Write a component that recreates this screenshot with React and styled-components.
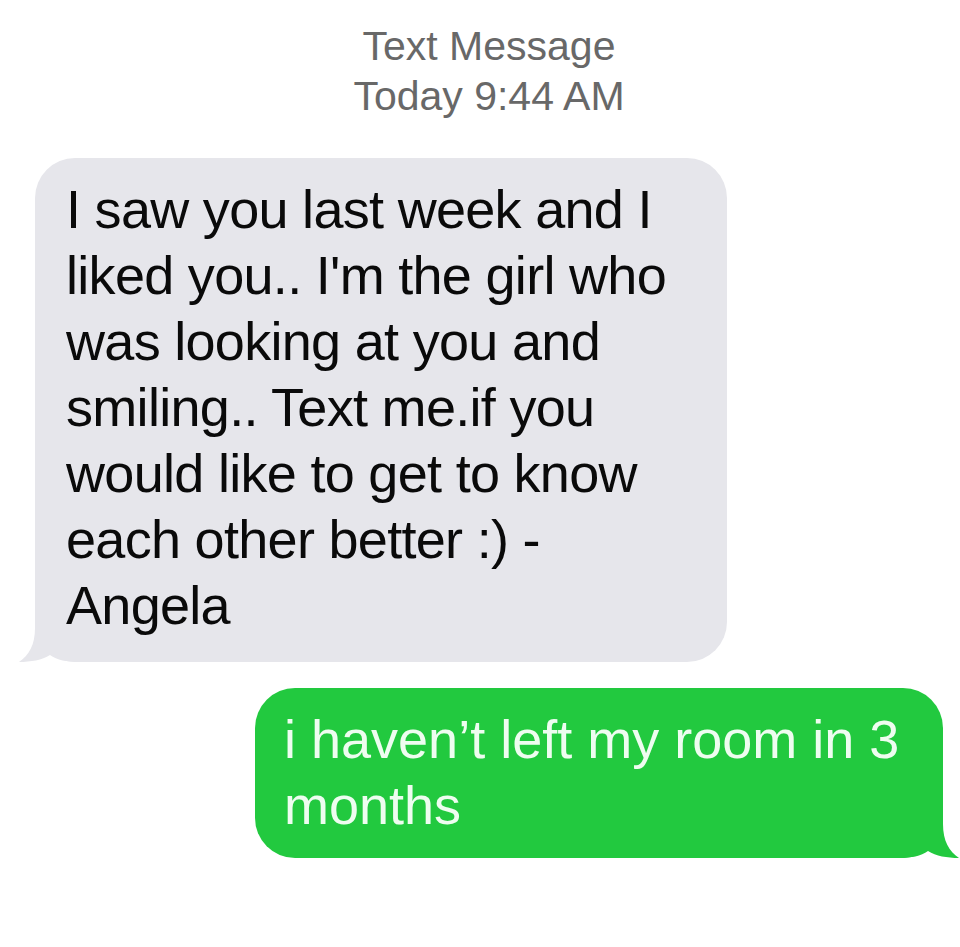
import styled, { createGlobalStyle } from "styled-components";

const incoming = [
  "I saw you last week and I",
  "liked you.. I'm the girl who",
  "was looking at you and",
  "smiling.. Text me.if you",
  "would like to get to know",
  "each other better :) -",
  "Angela",
];

const outgoing = ["i haven\u2019t left my room in 3", "months"];

function Tail({ side }) {
  return (
    <TailShape side={side} viewBox="0 0 60 50" width="60" height="50">
      <path d="M16 0 L16 16 C16 33 10 43 0 50 C12 50 23 48 31 43 C38 48 48 50 60 50 L60 0 Z" />
    </TailShape>
  );
}

export default function App() {
  return (
    <>
      <GlobalStyle />
      <Thread>
        <Header>
          <div>Text Message</div>
          <div>Today 9:44 AM</div>
        </Header>
        <Bubble side="left">
          <Tail side="left" />
          {incoming.map((line) => (
            <Line key={line}>{line}</Line>
          ))}
        </Bubble>
        <Bubble side="right">
          <Tail side="right" />
          {outgoing.map((line) => (
            <Line key={line}>{line}</Line>
          ))}
        </Bubble>
      </Thread>
    </>
  );
}

const GlobalStyle = createGlobalStyle`
  body {
    margin: 0;
    background: #ffffff;
    font-family: "Liberation Sans", Arial, sans-serif;
  }
`;

const Thread = styled.div`
  display: flex;
  flex-direction: column;
  padding: 21px 17px 40px 35px;
`;

const Header = styled.div`
  align-self: center;
  margin-bottom: 37px;
  text-align: center;
  color: #686868;
  font-size: 41px;
  line-height: 50px;
  letter-spacing: 0;
`;

const Bubble = styled.div`
  position: relative;
  box-sizing: border-box;
  width: ${(p) => (p.side === "left" ? "692px" : "688px")};
  align-self: ${(p) => (p.side === "left" ? "flex-start" : "flex-end")};
  margin-top: ${(p) => (p.side === "left" ? "0" : "26px")};
  padding: ${(p) => (p.side === "left" ? "18px 18px 24px 31px" : "18px 18px 20px 29px")};
  border-radius: 40px;
  background: ${(p) => (p.side === "left" ? "#e6e6eb" : "#22c93f")};
  color: ${(p) => (p.side === "left" ? "#0a0a0a" : "#eefdf0")};
  font-size: 54px;
  line-height: 66px;
  letter-spacing: ${(p) => (p.side === "left" ? "-0.7px" : "0")};
`;

const Line = styled.div`
  position: relative;
  white-space: nowrap;
`;

const TailShape = styled.svg`
  position: absolute;
  bottom: 0;
  ${(p) => (p.side === "left" ? "left: -16px;" : "right: -16px; transform: scaleX(-1);")}
  fill: ${(p) => (p.side === "left" ? "#e6e6eb" : "#22c93f")};
`;
